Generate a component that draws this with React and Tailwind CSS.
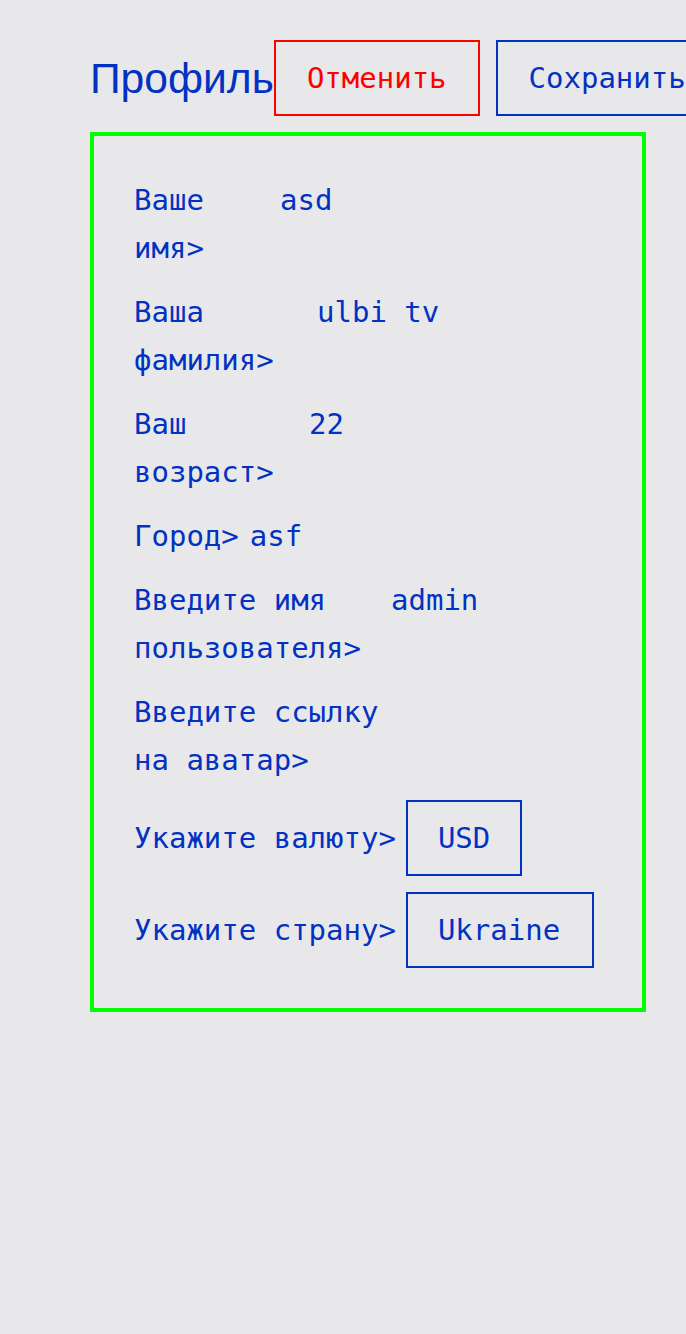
export default function App() {
  const fields = [
    { label: "Ваше имя>", value: "asd", w: "w-[137px]", m: "mr-[9px]" },
    { label: "Ваша фамилия>", value: "ulbi tv", w: "w-[174px]", m: "mr-[9px]" },
    { label: "Ваш возраст>", value: "22", w: "w-[166px]", m: "mr-[9px]" },
    { label: "Город>", value: "asf", w: "", m: "mr-[11px]" },
    { label: "Введите имя пользователя>", value: "admin", w: "w-[248px]", m: "mr-[9px]" },
    { label: "Введите ссылку на аватар>", value: "", w: "w-[260px]", m: "mr-[9px]" },
  ];
  const selects = [
    { label: "Укажите валюту>", value: "USD", w: "w-[116px]" },
    { label: "Укажите страну>", value: "Ukraine", w: "w-[188px]" },
  ];
  return (
    <div className="min-h-[1334px] w-full overflow-hidden bg-[#e8e8ea] text-[#0232c2] font-['DejaVu_Sans_Mono',monospace] text-[29px] leading-[48px]">
      <div className="pl-[90px] pt-[40px]">
        <div className="flex items-center whitespace-nowrap">
          <h1 className="shrink-0 font-['Liberation_Sans',Arial,sans-serif] text-[42.6px] leading-none">
            Профиль
          </h1>
          <button className="shrink-0 h-[76px] border-2 border-[#ff0000] px-[31px] text-[#ff0000]">
            Отменить
          </button>
          <button className="ml-[16px] shrink-0 h-[76px] border-2 border-[#0232c2] px-[31px] text-[#0232c2]">
            Сохранить
          </button>
        </div>
        <div className="mt-[16px] w-[556px] border-4 border-[#00ff00] pl-[40px] pr-[36px] py-[40px] flex flex-col gap-[16px]">
          {fields.map((f) => (
            <div key={f.label} className="flex">
              <div className={`${f.w} ${f.m} shrink-0`}>{f.label}</div>
              <span className="whitespace-pre">{f.value}</span>
            </div>
          ))}
          {selects.map((s) => (
            <div key={s.label} className="flex items-center">
              <span className="mr-[10px] whitespace-nowrap">{s.label}</span>
              <div className={`${s.w} h-[76px] border-2 border-[#0232c2] pl-[30px] flex items-center`}>
                {s.value}
              </div>
            </div>
          ))}
        </div>
      </div>
    </div>
  );
}
